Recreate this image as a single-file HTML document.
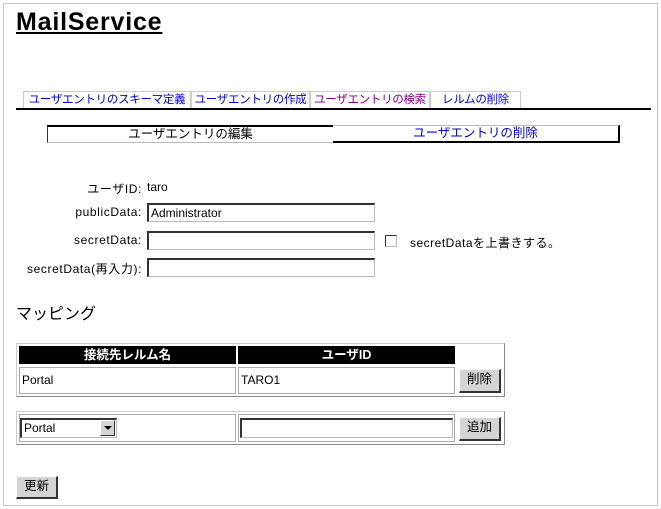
<!DOCTYPE html>
<html><head><meta charset="utf-8"><style>
*{margin:0;padding:0;box-sizing:border-box}
body{width:661px;height:509px;background:#fff;position:relative;overflow:hidden;font-family:"Liberation Sans","Noto Sans CJK JP",sans-serif;font-size:12px;color:#000}
.a{position:absolute;white-space:nowrap}
.frame{left:3px;top:3px;width:655px;height:503px;border:1px solid #c8c8c8}
.tab{top:91px;height:18px;border:1px solid #ccc;border-bottom:none;line-height:16px;font-size:11.5px;letter-spacing:-0.3px;text-align:center;overflow:hidden}
.inp{height:19px;border:1px solid #bbb;border-top:2px solid #333;border-left:2px solid #333;background:#fff;padding-left:2px;line-height:16px;font-size:12px}
.lbl{right:519px;text-align:right;font-size:12px;letter-spacing:0.6px}
.btn{background:#d4d4d4;border:1px solid #fff;border-right:2px solid #333;border-bottom:2px solid #333;text-align:center;font-size:12.5px;line-height:19px}
.hd{background:#000;color:#fff;font-weight:bold;text-align:center;font-size:12.5px;line-height:18px;height:18px}
.cell{border:1px solid #aaa;background:#fff}
</style></head><body>
<div class="a frame"></div>
<div class="a" style="left:16px;top:8px;font-size:25px;font-weight:bold;text-decoration:underline;letter-spacing:0.8px">MailService</div>

<div class="a tab" style="left:23px;width:168px;color:#00c">ユーザエントリのスキーマ定義</div>
<div class="a tab" style="left:191px;width:119px;color:#00c">ユーザエントリの作成</div>
<div class="a tab" style="left:310px;width:120px;color:#808">ユーザエントリの検索</div>
<div class="a tab" style="left:430px;width:91px;color:#00c">レルムの削除</div>
<div class="a" style="left:16px;top:108px;width:635px;height:2px;background:#000"></div>

<div class="a" style="left:47px;top:125px;width:286px;height:18px;border-top:2px solid #000;border-left:1px solid #333;border-bottom:1px solid #bbb;text-align:center;line-height:15px;font-size:12.5px">ユーザエントリの編集</div>
<div class="a" style="left:333px;top:125px;width:287px;height:18px;border-top:1px solid #bbb;border-right:2px solid #000;border-bottom:2px solid #000;text-align:center;line-height:15px;font-size:12.5px;color:#00c">ユーザエントリの削除</div>

<div class="a lbl" style="top:180px">ユーザID:</div>
<div class="a" style="left:147px;top:180px">taro</div>
<div class="a lbl" style="top:205px">publicData:</div>
<div class="a inp" style="left:147px;top:203px;width:228px">Administrator</div>
<div class="a lbl" style="top:233px">secretData:</div>
<div class="a inp" style="left:147px;top:231px;width:228px"></div>
<div class="a" style="left:385px;top:235px;width:12px;height:12px;border:1px solid #333;border-right-color:#bbb;border-bottom-color:#bbb"></div>
<div class="a" style="left:410px;top:234px;letter-spacing:0.5px">secretDataを上書きする。</div>
<div class="a lbl" style="top:260px">secretData(再入力):</div>
<div class="a inp" style="left:147px;top:258px;width:228px"></div>

<div class="a" style="left:16px;top:300px;font-size:16px">マッピング</div>

<div class="a" style="left:16px;top:343px;width:489px;height:54px;border:1px solid #ccc;border-right-color:#888;border-bottom-color:#888"></div>
<div class="a hd" style="left:19px;top:346px;width:217px">接続先レルム名</div>
<div class="a hd" style="left:238px;top:346px;width:217px">ユーザID</div>
<div class="a cell" style="left:19px;top:367px;width:217px;height:27px;padding:4px 2px;line-height:17px">Portal</div>
<div class="a cell" style="left:238px;top:367px;width:217px;height:27px;padding:4px 2px;line-height:17px">TARO1</div>
<div class="a btn" style="left:459px;top:369px;width:42px;height:24px">削除</div>

<div class="a" style="left:16px;top:411px;width:489px;height:34px;border:1px solid #ccc;border-right-color:#888;border-bottom-color:#888"></div>
<div class="a cell" style="left:19px;top:414px;width:217px;height:28px"></div>
<div class="a cell" style="left:238px;top:414px;width:217px;height:28px"></div>
<div class="a inp" style="left:20px;top:418px;width:97px;height:20px;line-height:16px">Portal</div>
<div class="a" style="left:100px;top:420px;width:15px;height:16px;background:#d4d4d4;border:1px solid #fff;border-right-color:#333;border-bottom-color:#333"><div style="margin:5px auto 0;width:0;height:0;border-left:4px solid transparent;border-right:4px solid transparent;border-top:4px solid #000"></div></div>
<div class="a inp" style="left:240px;top:418px;width:213px;height:20px"></div>
<div class="a btn" style="left:459px;top:417px;width:42px;height:24px">追加</div>

<div class="a btn" style="left:16px;top:476px;width:42px;height:23px">更新</div>
</body></html>
